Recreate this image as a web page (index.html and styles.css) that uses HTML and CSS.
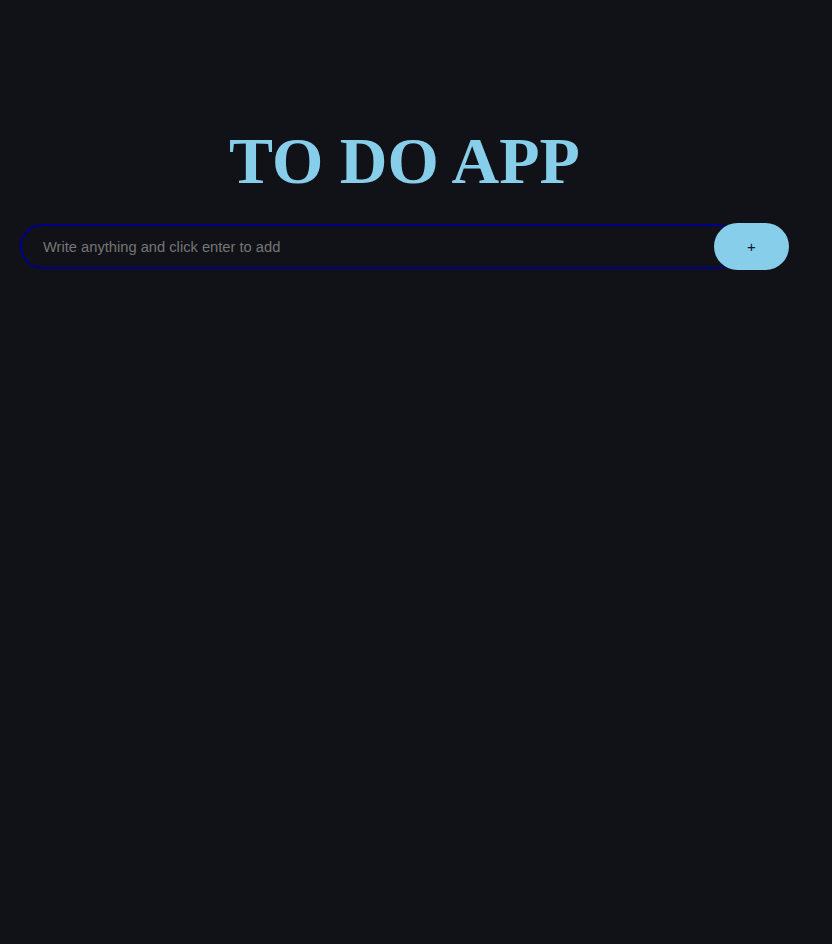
FILE: index.html
```html
<!DOCTYPE html>
<html>
<head>
<meta charset="utf-8">
<link rel="stylesheet" href="styles.css">
</head>
<body>
<div class="app">
  <h1 class="title">TO DO APP</h1>
  <form class="add-form">
    <input class="add-input" type="text" placeholder="Write anything and click enter to add">
    <button class="add-btn" type="button">+</button>
  </form>
</div>
</body>
</html>
```
FILE: styles.css
```css
html, body {
  margin: 0;
  padding: 0;
  background: #111217;
  height: 100%;
}
.app {
  width: 769px;
  margin-left: 20px;
  padding-top: 117px;
}
.title {
  margin: 0 0 18px 0;
  text-align: center;
  font-family: "Liberation Serif", "DejaVu Serif", serif;
  font-weight: bold;
  font-size: 66px;
  line-height: 88px;
  color: #87ceeb;
}
.add-form {
  display: flex;
  align-items: center;
}
.add-input {
  box-sizing: border-box;
  width: 720px;
  height: 45px;
  border: 2px solid #00008b;
  border-radius: 23px;
  background: #111217;
  padding: 0 21px;
  font-family: "Liberation Sans", Arial, sans-serif;
  font-size: 14.7px;
  color: #ddd;
  outline: none;
}
.add-input::placeholder {
  color: #757575;
}
.add-btn {
  box-sizing: border-box;
  width: 75px;
  height: 47px;
  margin-left: -26px;
  border: none;
  border-radius: 23.5px;
  background: #87ceeb;
  color: #10103a;
  font-family: "Liberation Sans", Arial, sans-serif;
  font-size: 15px;
  padding: 0;
}
```
